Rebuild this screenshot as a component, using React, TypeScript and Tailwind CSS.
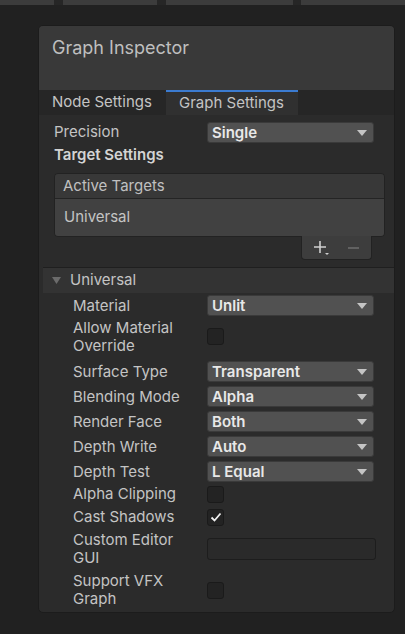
import React from 'react';

const Caret = () => (
  <svg width="10" height="6" viewBox="0 0 10 6" className="shrink-0">
    <path d="M0 0 H10 L5 6 Z" fill="#c4c4c4" />
  </svg>
);

const Dropdown = ({ value }: { value: string }) => (
  <div className="w-[167px] h-[21px] rounded-[3px] bg-[#515151] border border-[#3a3a3a] flex items-center justify-between pl-[4px] pr-[6px]">
    <span className="text-[15px] font-semibold text-[#e8e8e8] leading-none">{value}</span>
    <Caret />
  </div>
);

const Checkbox = ({ checked }: { checked?: boolean }) => (
  <div className="w-[17px] h-[17px] rounded-[3px] bg-[#232323] border border-[#1a1a1a] flex items-center justify-center">
    {checked && (
      <svg width="12" height="10" viewBox="0 0 12 10">
        <path d="M1.5 5.5 L4.5 8.5 L10.5 1.5" stroke="#f0f0f0" strokeWidth="1.8" fill="none" />
      </svg>
    )}
  </div>
);

type Row = { label: string[]; kind: 'drop' | 'check' | 'text'; value?: string; checked?: boolean; cls: string };

const ROWS: Row[] = [
  { label: ['Material'], kind: 'drop', value: 'Unlit', cls: 'h-[21px] mt-[2px]' },
  { label: ['Allow Material', 'Override'], kind: 'check', cls: 'h-[37px] mt-[2px]' },
  { label: ['Surface Type'], kind: 'drop', value: 'Transparent', cls: 'h-[21px] mt-[6px]' },
  { label: ['Blending Mode'], kind: 'drop', value: 'Alpha', cls: 'h-[21px] mt-[4px]' },
  { label: ['Render Face'], kind: 'drop', value: 'Both', cls: 'h-[21px] mt-[4px]' },
  { label: ['Depth Write'], kind: 'drop', value: 'Auto', cls: 'h-[21px] mt-[4px]' },
  { label: ['Depth Test'], kind: 'drop', value: 'L Equal', cls: 'h-[21px] mt-[4px]' },
  { label: ['Alpha Clipping'], kind: 'check', cls: 'h-[20px] mt-[2px]' },
  { label: ['Cast Shadows'], kind: 'check', checked: true, cls: 'h-[20px] mt-[3px]' },
  { label: ['Custom Editor', 'GUI'], kind: 'text', cls: 'h-[38px] mt-[3px]' },
  { label: ['Support VFX', 'Graph'], kind: 'check', cls: 'h-[38px] mt-[3px]' },
];

export default function App() {
  return (
    <div className="w-[405px] h-[634px] bg-[#212121] overflow-hidden font-['Inter',sans-serif] text-[#c4c4c4]">
      {/* top editor tabs */}
      <div className="flex h-[5px] bg-[#1b1b1b]">
        <div className="w-[54px] bg-[#3c3c3c]" />
        <div className="w-[9px] bg-[#262626]" />
        <div className="w-[94px] bg-[#3c3c3c]" />
        <div className="w-[9px] bg-[#262626]" />
        <div className="w-[127px] bg-[#3c3c3c]" />
        <div className="w-[8px] bg-[#262626]" />
        <div className="flex-1 bg-[#3c3c3c]" />
      </div>

      <div className="ml-[38px] mt-[20px] w-[357px] h-[588px] rounded-[5px] bg-[#2b2b2b] border border-[#1c1c1c] overflow-hidden flex flex-col">
        <div className="h-[64px] bg-[#393939] pl-[13px] pt-[10px] text-[18px] leading-[24px] text-[#bfbfbf]">
          Graph Inspector
        </div>

        <div className="h-[25px] flex bg-[#262626] text-[15px] text-[#c4c4c4]">
          <div className="w-[127px] pl-[13px] flex items-center">Node Settings</div>
          <div className="w-[132px] pl-[13px] flex items-center bg-[#303030] border-t-2 border-[#3b7bd0]">Graph Settings</div>
        </div>

        <div className="pl-[15px] text-[15px]">
          <div className="mt-[7px] h-[21px] flex items-center">
            <div className="w-[153px]">Precision</div>
            <Dropdown value="Single" />
          </div>
          <div className="h-[20px] mt-[2px] flex items-center font-semibold text-[#d4d4d4]">Target Settings</div>

          <div className="mt-[8px] w-[331px] rounded-[4px] border border-[#222222] overflow-hidden">
            <div className="h-[25px] bg-[#383838] border-b border-[#242424] pl-[8px] flex items-center text-[#c0c0c0]">Active Targets</div>
            <div className="h-[37px] bg-[#414141] pl-[9px] flex items-center text-[#c4c4c4]">Universal</div>
          </div>
          <div className="ml-[247px] w-[71px] h-[24px] -mt-[1px] rounded-b-[4px] bg-[#3d3d3d] border border-t-0 border-[#222222] flex items-center gap-[18px] pl-[12px]">
            <svg width="16" height="14" viewBox="0 0 16 14">
              <path d="M6 0 V12 M0 6 H12" stroke="#cfcfcf" strokeWidth="1.6" />
              <path d="M11 12 H15 L13 14 Z" fill="#cfcfcf" />
            </svg>
            <svg width="11" height="4" viewBox="0 0 11 4">
              <path d="M0 2 H11" stroke="#6e6e6e" strokeWidth="1.6" />
            </svg>
          </div>
        </div>

        <div className="mt-[7px] ml-[4px] border-t border-[#1f1f1f] h-[26px] bg-[#333333] flex items-center pl-[9px] gap-[9px] text-[15px] text-[#c4c4c4]">
          <svg width="9" height="7" viewBox="0 0 9 7">
            <path d="M0 0 H9 L4.5 7 Z" fill="#6b6b6b" />
          </svg>
          Universal
        </div>

        <div className="pl-[34px] text-[15px] leading-[18px] text-[#c4c4c4]">
          {ROWS.map((r, i) => (
            <div key={i} className={`flex items-center ${r.cls}`}>
              <div className="w-[134px]">
                {r.label.map((l, j) => (
                  <div key={j}>{l}</div>
                ))}
              </div>
              {r.kind === 'drop' && <Dropdown value={r.value!} />}
              {r.kind === 'check' && <Checkbox checked={r.checked} />}
              {r.kind === 'text' && (
                <div className="w-[169px] h-[22px] rounded-[3px] bg-[#2a2a2a] border border-[#1d1d1d]" />
              )}
            </div>
          ))}
        </div>
      </div>
    </div>
  );
}
